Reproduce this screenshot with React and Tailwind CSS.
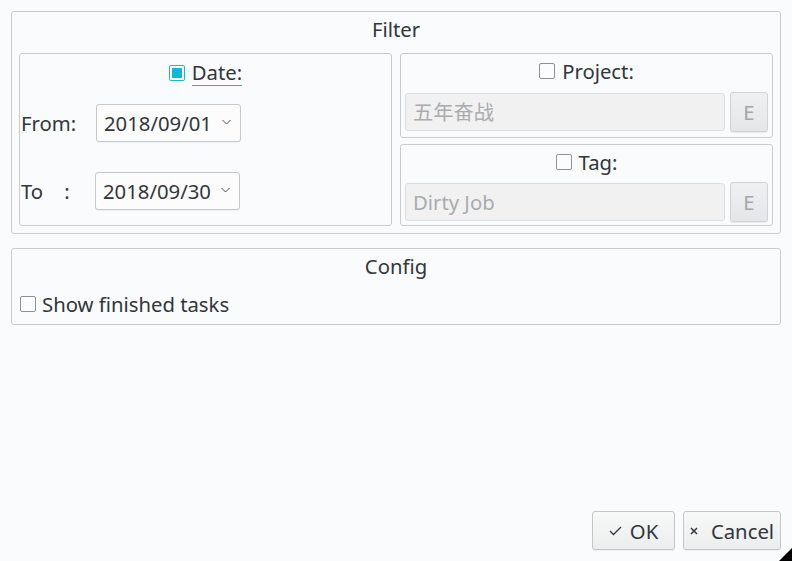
import React from "react";

const font = { fontFamily: '"Noto Sans", "Noto Sans CJK SC", sans-serif' };

function Check({ checked }) {
  if (checked) {
    return (
      <span className="flex h-[16px] w-[16px] items-center justify-center rounded-[2px] border-[1.5px] border-[#1cb5d2] bg-[#fcfcfc]">
        <span className="h-[10px] w-[10px] bg-[#12b6d6]" />
      </span>
    );
  }
  return <span className="block h-[16px] w-[16px] rounded-[2px] border border-[#8e9194] bg-[#fcfcfc]" />;
}

function Combo({ value }) {
  return (
    <div className="flex h-[38px] w-[145px] items-center justify-between rounded-[3px] border border-[#c6c8ca] bg-[#fcfcfc] pl-[7px] pr-[9px] shadow-[0_1px_0_rgba(0,0,0,0.04)]">
      <span>{value}</span>
      <svg width="9" height="6" viewBox="0 0 9 6" className="mt-[-2px]">
        <polyline points="0.5,1 4.5,5 8.5,1" fill="none" stroke="#4d5257" strokeWidth="1" />
      </svg>
    </div>
  );
}

function DisabledRow({ value }) {
  return (
    <div className="flex h-[40px] items-center gap-[5px]">
      <div className="flex h-[38px] flex-1 items-center rounded-[3px] border border-[#dcdddf] bg-[#f1f1f2] pl-[7px] text-[#a9acae]">
        {value}
      </div>
      <div className="flex h-[40px] w-[38px] items-center justify-center rounded-[3px] border border-[#d0d2d4] bg-gradient-to-b from-[#eff0f1] to-[#e4e6e8] text-[#a3a6a9] shadow-[0_1px_1px_rgba(0,0,0,0.08)]">
        E
      </div>
    </div>
  );
}

export default function App() {
  return (
    <div
      style={font}
      className="relative flex h-[561px] w-[792px] flex-col bg-[#fafbfc] px-[11px] pb-[11px] pt-[11px] text-[20.3px] text-[#31363b]"
    >
      {/* Filter group */}
      <div className="flex flex-col rounded-[3px] border border-[#c9cbcd] px-[7px] pb-[7px] pt-[4px]">
        <div className="text-center leading-[26px]">Filter</div>
        <div className="mt-[11px] grid grid-cols-2 gap-[8px]">
          {/* Date */}
          <div className="flex flex-col rounded-[3px] border border-[#c9cbcd]">
            <div className="mt-[5px] flex h-[27px] items-center justify-center gap-[7px]">
              <Check checked />
              <span className="border-b border-[#1cb5d2] leading-[25px]">Date:</span>
            </div>
            <div className="mt-[18px] flex items-center">
              <span className="w-[76px] pl-[1px]">From:</span>
              <Combo value="2018/09/01" />
            </div>
            <div className="mt-[30px] flex items-center">
              <span className="w-[75px] pl-[1px] whitespace-pre">{"To    :"}</span>
              <Combo value="2018/09/30" />
            </div>
          </div>
          {/* Project & Tag */}
          <div className="flex flex-col gap-[6px]">
            <div className="flex h-[85px] flex-col rounded-[3px] border border-[#c9cbcd] px-[4px]">
              <div className="mt-[4px] flex h-[26px] items-center justify-center gap-[7px]">
                <Check />
                <span className="leading-[26px]">Project:</span>
              </div>
              <div className="mt-[8px]">
                <DisabledRow value="五年奋战" />
              </div>
            </div>
            <div className="flex h-[82px] flex-col rounded-[3px] border border-[#c9cbcd] px-[4px]">
              <div className="mt-[4px] flex h-[26px] items-center justify-center gap-[7px]">
                <Check />
                <span className="leading-[26px]">Tag:</span>
              </div>
              <div className="mt-[7px]">
                <DisabledRow value="Dirty Job" />
              </div>
            </div>
          </div>
        </div>
      </div>

      {/* Config group */}
      <div className="mt-[14px] flex flex-col rounded-[3px] border border-[#c9cbcd] px-[8px] pb-[7px] pt-[4px]">
        <div className="text-center leading-[26px]">Config</div>
        <div className="mt-[12px] flex h-[26px] items-center gap-[6px]">
          <Check />
          <span className="leading-[26px]">Show finished tasks</span>
        </div>
      </div>

      <div className="flex-1" />

      {/* Buttons */}
      <div className="flex justify-end gap-[8px]">
        <button className="flex h-[39px] w-[83px] items-center justify-center gap-[8px] rounded-[3px] border border-[#c3c5c7] bg-gradient-to-b from-[#f7f8f8] to-[#eceded] text-[#31363b] shadow-[0_1px_1px_rgba(0,0,0,0.06)]">
          <svg width="13" height="10" viewBox="0 0 13 10">
            <polyline points="1,5 4.5,8.5 12,1" fill="none" stroke="#31363b" strokeWidth="1.3" />
          </svg>
          <span className="leading-[26px]">OK</span>
        </button>
        <button className="flex h-[39px] w-[98px] items-center justify-center gap-[13px] rounded-[3px] border border-[#c3c5c7] bg-gradient-to-b from-[#f7f8f8] to-[#eceded] text-[#31363b] shadow-[0_1px_1px_rgba(0,0,0,0.06)]">
          <svg width="8" height="8" viewBox="0 0 8 8">
            <path d="M1 1 L7 7 M7 1 L1 7" stroke="#31363b" strokeWidth="1.5" />
          </svg>
          <span className="leading-[26px]">Cancel</span>
        </button>
      </div>

      {/* Resize grip */}
      <svg width="13" height="13" viewBox="0 0 13 13" className="absolute bottom-0 right-0">
        <polygon points="13,0 13,13 0,13" fill="#000" />
      </svg>
    </div>
  );
}
